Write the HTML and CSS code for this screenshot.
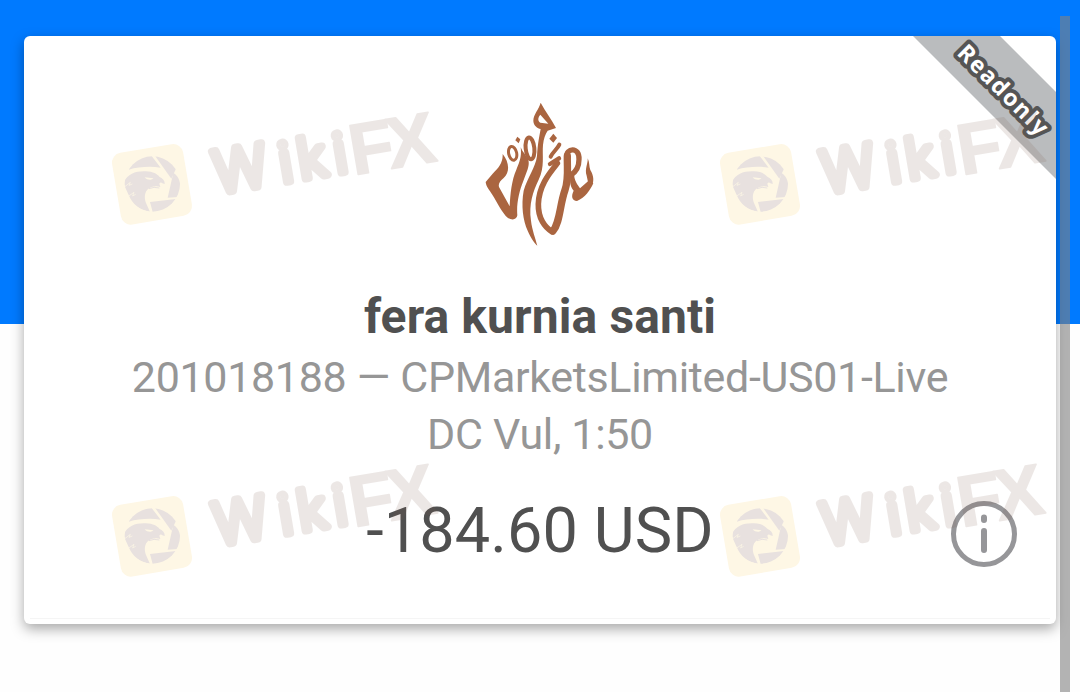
FILE: index.html
```
<!DOCTYPE html>
<html>
    <head>
        <meta charset="UTF-8">
        <meta name="viewport" content="width=device-width, initial-scale=1.0">
        <title>Account</title>
        <link rel="stylesheet" href="styles.css">
    </head>

    <body>

        <!-- shared shapes -->
        <svg class="defs" width="0" height="0">
            <defs>
                <clipPath id="round"><circle cx="157" cy="252" r="83"/></clipPath>
                <symbol id="mark" viewBox="0 0 1050 405">
                    <rect x="-108" y="-109" width="216" height="218" rx="30" transform="translate(156 253) rotate(-9.6)" fill="#fef7e5"/>
                    <g fill="#e8e1df" clip-path="url(#round)">
                        <path d="M86 209C96 178 125 166 155 168L182 203C150 198 115 201 86 209Z"/>
                        <path d="M164 166C200 170 220 190 228 206L214 236Z"/>
                        <path d="M220 218C246 235 246 272 234 291L203 293Z"/>
                        <path d="M150 306L228 297C210 325 182 338 158 336Z"/>
                        <path d="M70 250C80 222 108 212 138 214C160 215 171 222 178 230C188 234 195 242 194 252L187 250C184 246 180 247 178 251L181 261C165 256 151 261 142 269C132 280 133 299 139 311L150 336C120 330 97 313 86 285Z"/>
                    </g>
                    <path d="M134 232L160 235C155 241 143 242 134 232Z" fill="#fef7e5"/>
                    <path d="M147 266Q162 259 178 264" fill="none" stroke="#e8e1df" stroke-width="3"/>
                    <path d="M72 262L91 247L87 256L97 252M82 291L102 277L98 288L107 283" fill="none" stroke="#fef7e5" stroke-width="2"/>
                    <g class="mark-text" transform="translate(350 298) rotate(-9.6)">
                        <text class="mark-wiki" x="5 203 261 369" y="-17"><tspan class="mark-w">W</tspan>iki</text>
                        <text class="mark-fx" x="417 531" y="-3">FX</text>
                    </g>
                </symbol>
            </defs>
        </svg>

        <div class="header"></div>

        <div class="card">
            <svg class="logo" width="140" height="170" viewBox="0 0 420 510">
                <g fill="#aa6540">
                    <path fill-rule="evenodd" d="M212 38C206 60 190 72 190 93C191 108 202 115 212 117C208 139 203 160 201 198C197 231 172 264 161 302C153 346 159 391 173 422C183 446 194 459 202 467C197 447 186 419 183 392C176 342 189 304 206 269C225 231 216 195 219 165C221 145 226 132 233 122L258 114C245 89 226 64 212 38ZM211 74L235 101L211 98C202 92 204 82 211 74Z"/>
                    <path d="M98 192C99 218 86 233 68 251L47 276C48 289 58 300 67 314C82 338 96 368 114 384C126 391 140 390 142 376C139 342 147 305 160 273C169 247 180 228 175 209C168 195 158 187 152 172C156 201 147 218 139 239C125 270 121 312 119 349L87 291C84 280 91 273 101 264C122 244 116 214 98 192Z"/>
                    <path d="M142 140L151 148L146 160L136 151Z"/>
                    <path d="M250 131L261 144L250 158L238 146Z"/>
                    <path d="M353 205C355 219 343 238 350 257L354 276L368 282C373 266 368 252 361 240C357 230 359 217 353 205Z"/>
                    <path d="M313 248C310 270 324 285 330 295L354 274L370 280C360 301 346 323 321 333C305 332 303 318 311 302C298 287 300 271 301 253Z"/>
                </g>
                <g fill="none" stroke="#aa6540" stroke-linecap="round">
                    <ellipse cx="128" cy="190" rx="12" ry="21" stroke-width="9" transform="rotate(-12 128 190)"/>
                    <ellipse cx="180" cy="175" rx="13" ry="33" stroke-width="12" transform="rotate(-6 180 175)"/>
                    <path d="M262 220C238 250 207 286 205 342C204 385 225 413 246 425" stroke-width="17"/>
                    <path d="M292 198C291 235 297 265 285 300C269 345 270 398 249 423" stroke-width="22"/>
                    <path d="M290 202C287 173 329 169 327 208C327 232 316 247 303 255" stroke-width="16"/>
                    <path d="M268 164C262 177 249 185 242 200" stroke-width="12"/>
                    <path d="M240 222L267 205" stroke-width="13"/>
                </g>
            </svg>
            <div class="name">fera kurnia santi</div>
            <div class="details">201018188 — CPMarketsLimited-US01-Live</div>
            <div class="details second">DC Vul, 1:50</div>
            <div class="balance">-184.60 USD</div>

            <svg class="info" width="68" height="68" viewBox="0 0 68 68">
                <circle cx="34" cy="34" r="30.5" fill="none" stroke="#969699" stroke-width="5"/>
                <path d="M34 17.5v2.5M34 31v19" fill="none" stroke="#969699" stroke-width="6" stroke-linecap="round"/>
            </svg>

            <svg class="ribbon" width="160" height="160">
                <path d="M17 0H104L160 56V143Z" fill="#babcbe"/>
                <text x="0" y="0" textLength="117" transform="translate(60 18) rotate(45)">Readonly</text>
            </svg>
        </div>

        <div class="marks">
            <svg><use href="#mark"/></svg>
            <svg><use href="#mark"/></svg>
            <svg><use href="#mark"/></svg>
            <svg><use href="#mark"/></svg>
        </div>

        <div class="scrollbar"></div>

    </body>
</html>
```

FILE: styles.css
```
body {
    margin: 0;
    height: 692px;
    position: relative;
    overflow: hidden;
    background: #fefefe;
    font-family: Roboto, sans-serif;
}

.defs {
    position: absolute;
}

.header {
    height: 324px;
    background: #007aff;
}

.card {
    position: relative;
    box-sizing: border-box;
    height: 588px;
    margin: -288px 24px 0;
    padding-top: 54px;
    display: flex;
    flex-direction: column;
    align-items: center;
    background: #fff;
    border-radius: 6px;
    box-shadow: 0 5px 13px rgba(0, 0, 0, .34);
}

.card::after {
    content: "";
    position: absolute;
    left: 6px;
    right: 6px;
    bottom: 5px;
    height: 1px;
    background: #f5f5f5;
}

.logo {
    display: block;
}

.name {
    margin-top: 27px;
    line-height: 60px;
    font-size: 48px;
    font-weight: bold;
    letter-spacing: .1px;
    color: #505050;
    white-space: nowrap;
}

.details {
    margin-top: 1px;
    line-height: 58px;
    font-size: 43px;
    letter-spacing: -.33px;
    color: #969696;
    white-space: nowrap;
}

.second {
    margin-top: 0;
    line-height: 56px;
}

.balance {
    margin-top: 28px;
    line-height: 82px;
    font-size: 63px;
    letter-spacing: .1px;
    color: #505050;
    white-space: nowrap;
}

.info {
    position: absolute;
    left: 926px;
    top: 464px;
}

.ribbon {
    position: absolute;
    top: 0;
    right: 0;
    overflow: visible;
}

.ribbon text {
    font-family: "Noto Sans", sans-serif;
    font-size: 23px;
    font-weight: bold;
    fill: #fff;
    stroke: #555;
    stroke-width: 8px;
    stroke-linejoin: round;
    paint-order: stroke;
}

/* tiled watermark above the card */
.marks {
    position: absolute;
    left: 100px;
    top: 100px;
    display: grid;
    grid-template-columns: 350px 350px;
    gap: 217px 258px;
    pointer-events: none;
}

.marks svg {
    width: 350px;
    height: 135px;
}

.mark-text {
    opacity: .14;
    fill: #7e5c4e;
    stroke: #7e5c4e;
    stroke-linejoin: round;
}

.mark-wiki {
    font-family: Roboto, sans-serif;
    font-size: 164px;
    font-weight: 300;
    stroke-width: 24px;
}

.mark-w {
    font-size: 178px;
}

.mark-fx {
    font-family: "Liberation Sans", sans-serif;
    font-size: 216px;
    font-weight: bold;
    stroke-width: 5px;
}

.scrollbar {
    position: absolute;
    left: 1060px;
    top: 16px;
    bottom: 0;
    width: 10px;
    background: rgba(128, 128, 128, .6);
}
```
